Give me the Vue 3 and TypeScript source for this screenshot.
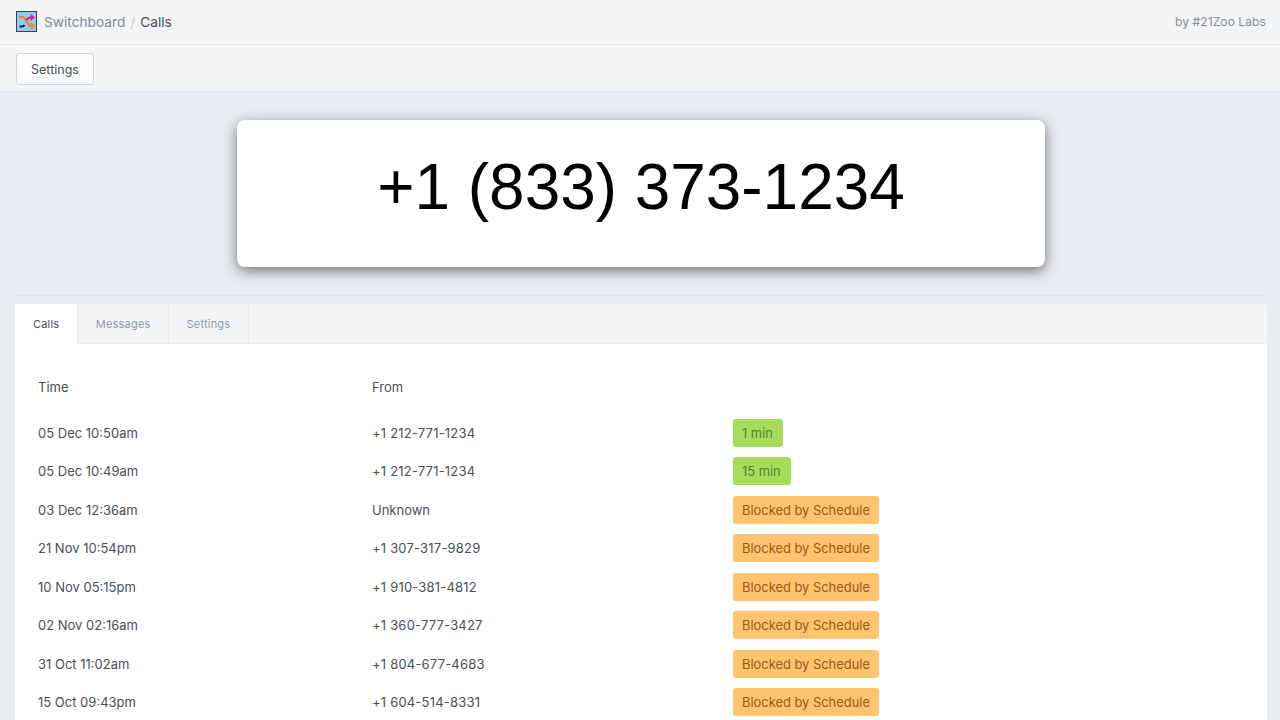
<template>
  <div class="page">
    <header class="topbar">
      <div class="crumbs">
        <svg class="logo" width="21" height="21" viewBox="0 0 21 21">
          <rect x="0.5" y="0.5" width="20" height="20" fill="#90caf5" stroke="#39424c" />
          <path d="M3 6h3.500c4 0 4 9 8.500 9h1" fill="none" stroke="#f5821f" stroke-width="2" />
          <path d="M15 11.500l4.500 3.500-4.500 3.500z" fill="#f5821f" />
          <path d="M3.500 15.500h2.500c1.500 0 2-.5 2.500-1.500" fill="none" stroke="#1f2328" stroke-width="2" />
          <path d="M10.500 9c1-2 2.500-2.500 4.500-2.500" fill="none" stroke="#ec1c7c" stroke-width="2" />
          <path d="M14.500 3l4.500 3.500-4.500 3.500z" fill="#ec1c7c" />
        </svg>
        <span class="crumb">Switchboard</span>
        <span class="slash">/</span>
        <span class="current">Calls</span>
      </div>
      <span class="byline">by #21Zoo Labs</span>
    </header>

    <div class="toolbar">
      <button class="btn">Settings</button>
    </div>

    <main class="content">
      <div class="hero">
        <div class="hero-card">+1 (833) 373-1234</div>
      </div>
      <hr class="divider" />

      <section class="card">
        <div class="tabs">
          <button
            v-for="name in tabs"
            :key="name"
            class="tab"
            :class="{ active: tab === name }"
            @click="tab = name"
          >{{ name }}</button>
        </div>
        <div class="card-body">
          <div class="row head">
            <span>Time</span>
            <span>From</span>
            <span></span>
          </div>
          <div v-for="call in calls" :key="call.time" class="row">
            <span>{{ call.time }}</span>
            <span :class="{ num: call.from.startsWith('+') }">{{ call.from }}</span>
            <span><em class="badge" :class="call.kind">{{ call.status }}</em></span>
          </div>
        </div>
      </section>
    </main>
  </div>
</template>

<script setup lang="ts">
import { ref } from 'vue'

const tabs = ['Calls', 'Messages', 'Settings']
const tab = ref('Calls')
const blocked = 'Blocked by Schedule'

const calls = [
  { time: '05 Dec 10:50am', from: '+1 212-771-1234', status: '1 min', kind: 'ok' },
  { time: '05 Dec 10:49am', from: '+1 212-771-1234', status: '15 min', kind: 'ok' },
  { time: '03 Dec 12:36am', from: 'Unknown', status: blocked, kind: 'warn' },
  { time: '21 Nov 10:54pm', from: '+1 307-317-9829', status: blocked, kind: 'warn' },
  { time: '10 Nov 05:15pm', from: '+1 910-381-4812', status: blocked, kind: 'warn' },
  { time: '02 Nov 02:16am', from: '+1 360-777-3427', status: blocked, kind: 'warn' },
  { time: '31 Oct 11:02am', from: '+1 804-677-4683', status: blocked, kind: 'warn' },
  { time: '15 Oct 09:43pm', from: '+1 604-514-8331', status: blocked, kind: 'warn' }
]
</script>

<style>
html, body { margin: 0; height: 100%; overflow: hidden; background: #e9ecef; }
</style>

<style scoped>
.page { height: 720px; overflow: hidden; font-family: Inter, "Noto Sans", sans-serif; color: #495057; background: #e9ecef; }
.topbar { display: flex; align-items: center; justify-content: space-between; height: 43px; padding: 0 14px 1px 16px; background: #f4f5f7; border-bottom: 1px solid #e4e7ea; box-sizing: content-box; }
.crumbs { display: flex; align-items: center; font-size: 13.700px; }
.logo { margin-right: 7px; }
.crumb { color: #7d8a96; }
.slash { color: #c4cad0; margin: 0 5px 0 5px; }
.current { color: #495057; }
.byline { font-size: 12.200px; color: #868e96; }
.toolbar { height: 47px; padding: 8px 16px 0; box-sizing: border-box; background: #f4f5f7; border-bottom: 1px solid #e3e6e9; }
.btn { width: 78px; height: 32px; padding: 0; font: inherit; font-size: 12.500px; color: #495057; background: linear-gradient(#fff, #f8f9fa); border: 1px solid #ced4da; border-radius: 3px; }
.content { padding: 0 13px 0 15px; }
.hero { display: flex; justify-content: center; padding: 28px 0 28px; }
.hero-card { width: 808px; height: 147px; padding-bottom: 13px; box-sizing: border-box; display: flex; align-items: center; justify-content: center; font-family: "Liberation Sans", Arial, sans-serif; font-size: 63.900px; color: #000; background: #fff; border-radius: 8px; box-shadow: 0 4px 14px rgba(0, 0, 0, 0.5); }
.divider { margin: 0 0 8px; border: 0; border-top: 1px solid #dfe3e7; }
.card { background: #fff; border-radius: 4px 4px 0 0; }
.tabs { display: flex; height: 40px; box-sizing: border-box; background: #f4f5f7; border-bottom: 1px solid #e9ecef; border-radius: 4px 4px 0 0; }
.tab { padding: 0 17.500px 0; height: 40px; font: inherit; font-size: 11px; letter-spacing: 0.2px; color: #8a99a8; background: none; border: 0; border-right: 1px solid #e9ecef; }
.tab.active { padding: 0 18px 1px; color: #495057; background: #fff; border-radius: 4px 0 0 0; }
.card-body { padding: 23.300px 23px 0; }
.row { display: grid; grid-template-columns: 334px 361px 1fr; align-items: center; height: 38.500px; font-size: 13px; }
.row.head { height: 46px; padding-bottom: 7px; box-sizing: border-box; }
.num { letter-spacing: 0.2px; }
.badge { display: inline-block; padding: 0 9px; height: 28px; line-height: 29px; border-radius: 3px; font-style: normal; font-size: 12.900px; }
.badge.ok { padding-right: 10px; background: #a5dc5c; color: #587f33; }
.badge.warn { background: #ffc46d; color: #a0561c; }
</style>
